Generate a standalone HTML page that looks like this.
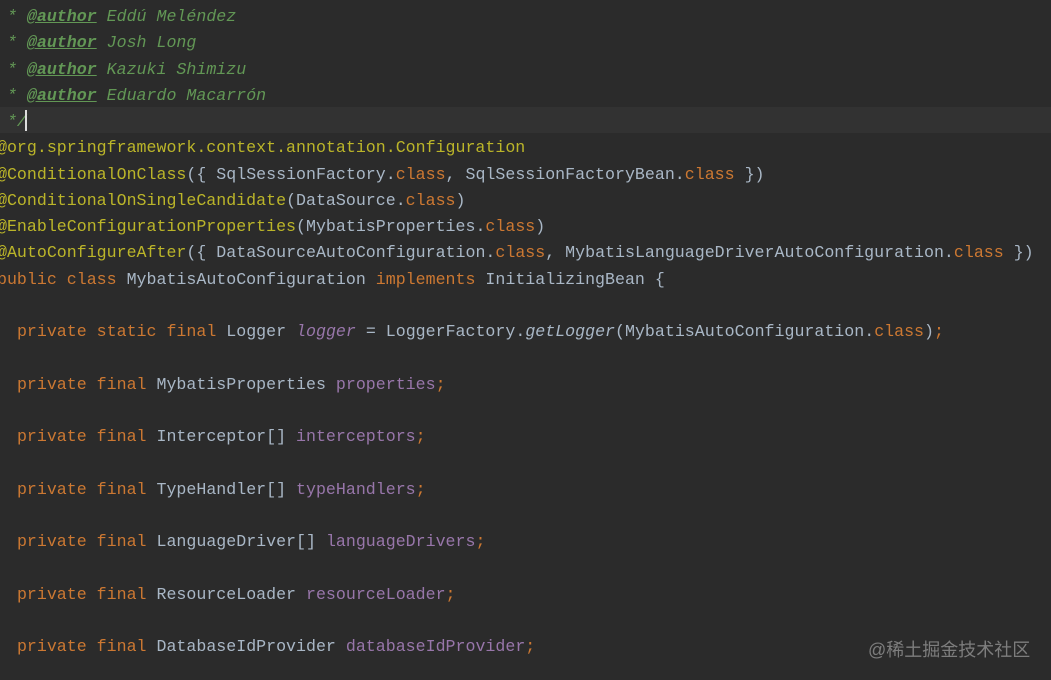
<!DOCTYPE html>
<html><head><meta charset="utf-8"><style>
html,body{margin:0;padding:0;width:1051px;height:680px;overflow:hidden;background:#2b2b2b;}
#code{position:absolute;left:-3px;top:4px;font-family:"Liberation Mono",monospace;font-size:16.62px;line-height:26.25px;color:#a9b7c6;white-space:pre;}
.l{height:26.25px;}
.c{color:#629755;font-style:italic}
.t{color:#629755;font-weight:bold;font-style:italic;text-decoration:underline}
.k{color:#cc7832}
.a{color:#bbb529}
.f{color:#9876aa}
.fi{color:#9876aa;font-style:italic}
.i{font-style:italic}
#hl{position:absolute;left:0;top:107px;width:1051px;height:26px;background:#323232;}
#caret{position:absolute;left:25px;top:110px;width:2px;height:21px;background:#ddd;}
#wm{position:absolute;left:868px;top:636px;font-family:"Liberation Sans","Noto Sans CJK SC",sans-serif;font-size:18px;color:#7d7d7d;}
</style></head><body>
<div id="hl"></div>
<div id="code"><div class="l"><span class="c"> * </span><span class="t">@author</span><span class="c"> Eddú Meléndez</span></div><div class="l"><span class="c"> * </span><span class="t">@author</span><span class="c"> Josh Long</span></div><div class="l"><span class="c"> * </span><span class="t">@author</span><span class="c"> Kazuki Shimizu</span></div><div class="l"><span class="c"> * </span><span class="t">@author</span><span class="c"> Eduardo Macarrón</span></div><div class="l"><span class="c"> */</span></div><div class="l"><span class="a">@org.springframework.context.annotation.Configuration</span></div><div class="l"><span class="a">@ConditionalOnClass</span>({ SqlSessionFactory.<span class="k">class</span>, SqlSessionFactoryBean.<span class="k">class</span> })</div><div class="l"><span class="a">@ConditionalOnSingleCandidate</span>(DataSource.<span class="k">class</span>)</div><div class="l"><span class="a">@EnableConfigurationProperties</span>(MybatisProperties.<span class="k">class</span>)</div><div class="l"><span class="a">@AutoConfigureAfter</span>({ DataSourceAutoConfiguration.<span class="k">class</span>, MybatisLanguageDriverAutoConfiguration.<span class="k">class</span> })</div><div class="l"><span class="k">public class</span> MybatisAutoConfiguration <span class="k">implements</span> InitializingBean {</div><div class="l"> </div><div class="l">  <span class="k">private static final</span> Logger <span class="fi">logger</span> = LoggerFactory.<span class="i">getLogger</span>(MybatisAutoConfiguration.<span class="k">class</span>)<span class="k">;</span></div><div class="l"> </div><div class="l">  <span class="k">private final</span> MybatisProperties <span class="f">properties</span><span class="k">;</span></div><div class="l"> </div><div class="l">  <span class="k">private final</span> Interceptor[] <span class="f">interceptors</span><span class="k">;</span></div><div class="l"> </div><div class="l">  <span class="k">private final</span> TypeHandler[] <span class="f">typeHandlers</span><span class="k">;</span></div><div class="l"> </div><div class="l">  <span class="k">private final</span> LanguageDriver[] <span class="f">languageDrivers</span><span class="k">;</span></div><div class="l"> </div><div class="l">  <span class="k">private final</span> ResourceLoader <span class="f">resourceLoader</span><span class="k">;</span></div><div class="l"> </div><div class="l">  <span class="k">private final</span> DatabaseIdProvider <span class="f">databaseIdProvider</span><span class="k">;</span></div></div>
<div id="caret"></div>
<div id="wm">@稀土掘金技术社区</div>
</body></html>
